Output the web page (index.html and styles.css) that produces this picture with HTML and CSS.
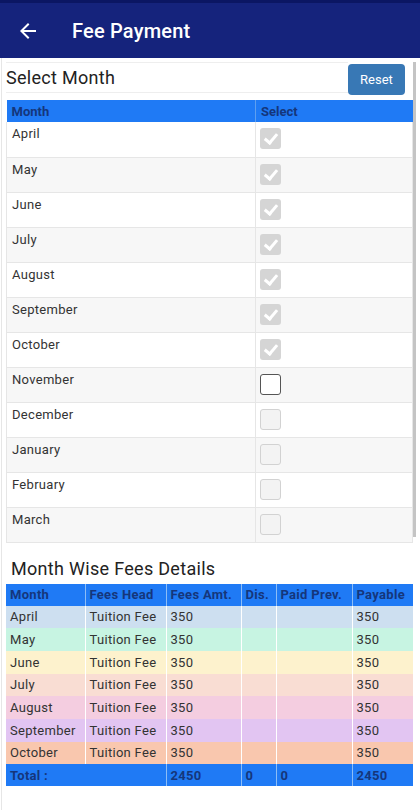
FILE: index.html
```html
<!DOCTYPE html>
<html lang="en">
<head>
<meta charset="utf-8">
<title>Fee Payment</title>
<link rel="stylesheet" href="styles.css">
</head>
<body>
<header class="appbar">
  <svg class="back" viewBox="0 0 24 24" width="24" height="24"><path fill="#fff" d="M20 11H7.83l5.59-5.59L12 4l-8 8 8 8 1.41-1.41L7.83 13H20v-2z"/></svg>
  <h1 class="appbar-title">Fee Payment</h1>
</header>
<main class="page">
  <div class="scrollbar"></div>
  <div class="sec-head">
    <h2 class="sec-title">Select Month</h2>
    <button class="reset">Reset</button>
  </div>
  <table class="months">
    <colgroup><col class="c-month"><col></colgroup>
    <thead><tr><th>Month</th><th>Select</th></tr></thead>
    <tbody>
      <tr><td>April</td><td><span class="cb done"></span></td></tr>
      <tr><td>May</td><td><span class="cb done"></span></td></tr>
      <tr><td>June</td><td><span class="cb done"></span></td></tr>
      <tr><td>July</td><td><span class="cb done"></span></td></tr>
      <tr><td>August</td><td><span class="cb done"></span></td></tr>
      <tr><td>September</td><td><span class="cb done"></span></td></tr>
      <tr><td>October</td><td><span class="cb done"></span></td></tr>
      <tr><td>November</td><td><span class="cb open"></span></td></tr>
      <tr><td>December</td><td><span class="cb off"></span></td></tr>
      <tr><td>January</td><td><span class="cb off"></span></td></tr>
      <tr><td>February</td><td><span class="cb off"></span></td></tr>
      <tr><td>March</td><td><span class="cb off"></span></td></tr>
    </tbody>
  </table>

  <h2 class="details-title">Month Wise Fees Details</h2>
  <table class="fees">
    <colgroup>
      <col class="w1"><col class="w2"><col class="w3"><col class="w4"><col class="w5"><col class="w6">
    </colgroup>
    <thead>
      <tr><th>Month</th><th>Fees Head</th><th>Fees Amt.</th><th>Dis.</th><th>Paid Prev.</th><th>Payable</th></tr>
    </thead>
    <tbody>
      <tr class="r-apr"><td>April</td><td>Tuition Fee</td><td>350</td><td></td><td></td><td>350</td></tr>
      <tr class="r-may"><td>May</td><td>Tuition Fee</td><td>350</td><td></td><td></td><td>350</td></tr>
      <tr class="r-jun"><td>June</td><td>Tuition Fee</td><td>350</td><td></td><td></td><td>350</td></tr>
      <tr class="r-jul"><td>July</td><td>Tuition Fee</td><td>350</td><td></td><td></td><td>350</td></tr>
      <tr class="r-aug"><td>August</td><td>Tuition Fee</td><td>350</td><td></td><td></td><td>350</td></tr>
      <tr class="r-sep"><td>September</td><td>Tuition Fee</td><td>350</td><td></td><td></td><td>350</td></tr>
      <tr class="r-oct"><td>October</td><td>Tuition Fee</td><td>350</td><td></td><td></td><td>350</td></tr>
      <tr class="total"><td>Total :</td><td></td><td>2450</td><td>0</td><td>0</td><td>2450</td></tr>
    </tbody>
  </table>
</main>
</body>
</html>
```

FILE: styles.css
```css
* { box-sizing: border-box; }
html, body { margin: 0; padding: 0; background: #fff; }
body {
  font-family: Roboto, "Noto Sans", "Liberation Sans", sans-serif;
  color: #333;
  width: 420px;
  height: 810px;
  overflow: hidden;
}

.appbar {
  height: 58px;
  background: #15237c;
  border-top: 3px solid #0b1663;
  display: flex;
  align-items: center;
  padding-left: 16px;
}
.back { display: block; flex: none; }
.appbar-title {
  margin: 0 0 0 32px;
  color: #fff;
  font-size: 20px;
  font-weight: 500;
  letter-spacing: 0.2px;
}

.page {
  position: relative;
  margin-left: 1px;
  border-left: 1px solid #e6e6e6;
  padding: 4px 7px 0 4px;
  min-height: 752px;
}
.scrollbar {
  position: absolute;
  left: 411px;
  top: 4px;
  width: 3px;
  height: 475px;
  background: #c4c4c4;
}

.sec-head {
  display: flex;
  align-items: flex-start;
  margin-bottom: 5px;
}
.sec-title {
  flex: 1;
  margin: 0;
  height: 31px;
  border-top: 1px solid #eeeeee;
  border-bottom: 1px solid #eeeeee;
  font-size: 18px;
  font-weight: 400;
  line-height: 29px;
  color: #222;
  letter-spacing: 0.3px;
}
.reset {
  margin: 2px 8px 0 0;
  width: 57px;
  height: 31px;
  border: none;
  border-radius: 4px;
  background: #3878b5;
  color: #fff;
  font-family: inherit;
  font-size: 13px;
  padding: 0;
}

table {
  border-collapse: collapse;
  table-layout: fixed;
  width: 407px;
}

/* month selection table */
.months .c-month { width: 249px; }
.months th {
  height: 22px;
  background: #1f7af5;
  color: #15367b;
  font-size: 13px;
  font-weight: 700;
  text-align: left;
  padding: 0 5px;
  border-right: 1px solid #5e9ff0;
}
.months th:last-child { border-right: none; }
.months td {
  height: 35px;
  vertical-align: top;
  padding: 3px 5px 0;
  font-size: 13px;
  line-height: 17px;
  letter-spacing: 0.3px;
  color: #333;
  border-bottom: 1px solid #e6e6e6;
  border-right: 1px solid #e6e6e6;
}
.months td:first-child { border-left: 1px solid #e6e6e6; }
.months td:last-child { padding: 6px 4px 0; }
.months tbody tr:nth-child(even) td { background: #f7f7f7; }

.cb {
  display: block;
  width: 21px;
  height: 21px;
  border-radius: 3px;
  position: relative;
}
.cb.done { background: #d5d5d5; }
.cb.done::after {
  content: "";
  position: absolute;
  left: 7px;
  top: 3px;
  width: 5px;
  height: 10px;
  border-right: 3px solid #fff;
  border-bottom: 3px solid #fff;
  transform: rotate(40deg);
}
.cb.open { background: #fff; border: 1.5px solid #555; }
.cb.off { background: #f3f3f3; border: 1px solid #d2d2d2; }

/* details */
.details-title {
  margin: 15px 0 4px;
  padding-left: 5px;
  font-size: 18px;
  font-weight: 400;
  line-height: 22px;
  color: #222;
  letter-spacing: 0.3px;
}
.fees .w1 { width: 79px; }
.fees .w2 { width: 81px; }
.fees .w3 { width: 75px; }
.fees .w4 { width: 35px; }
.fees .w5 { width: 76px; }
.fees .w6 { width: 61px; }
.fees th, .fees td {
  text-align: left;
  font-size: 13px;
  padding: 0 4px;
  white-space: nowrap;
  overflow: hidden;
  letter-spacing: 0.3px;
}
.fees th {
  height: 22px;
  background: #1f7af5;
  color: #15367b;
  font-weight: 700;
  border-right: 1px solid #8cbdf6;
}
.fees th:last-child { border-right: none; }
.fees td {
  height: 22.7px;
  color: #333;
  border-right: 1px solid rgba(255, 255, 255, 0.35);
}
.fees td:last-child { border-right: none; }
.r-apr td { background: #cddff0; }
.r-may td { background: #c7f4e2; }
.r-jun td { background: #fdf2cd; }
.r-jul td { background: #f9ddd3; }
.r-aug td { background: #f4cde0; }
.r-sep td { background: #e2c5f2; }
.r-oct td { background: #f9c7ae; }
.fees .total td {
  height: 22px;
  background: #1f7af5;
  color: #15367b;
  font-weight: 700;
  border-right: 1px solid #8cbdf6;
}
.fees .total td:first-child { border-right: none; }
.fees .total td:last-child { border-right: none; }
```
